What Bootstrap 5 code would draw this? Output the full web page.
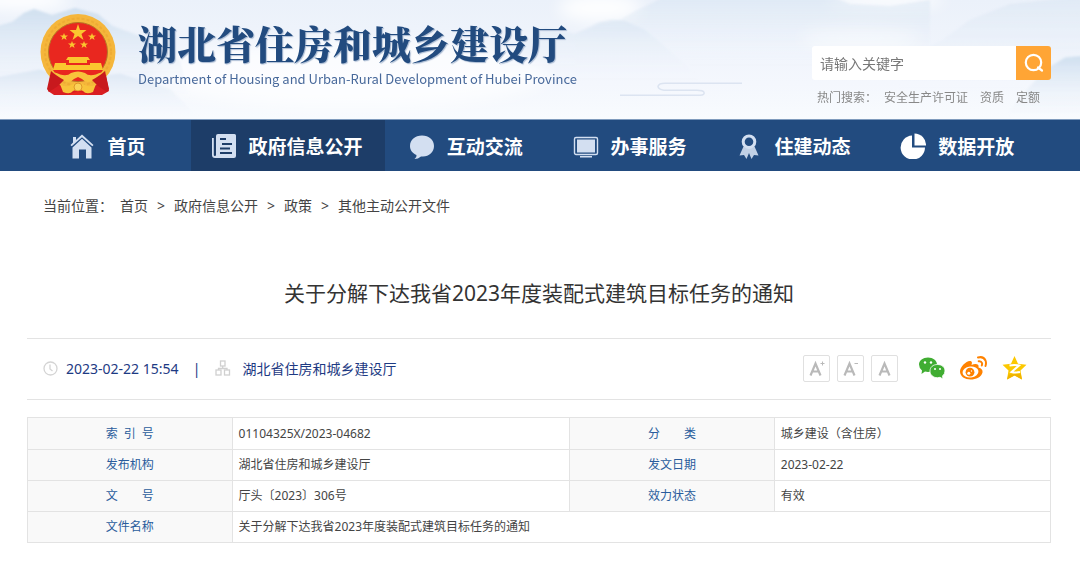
<!DOCTYPE html>
<html lang="zh-CN">
<head>
<meta charset="utf-8">
<meta name="viewport" content="width=device-width, initial-scale=1">
<title>关于分解下达我省2023年度装配式建筑目标任务的通知</title>
<link href="https://cdn.jsdelivr.net/npm/bootstrap@5.3.0/dist/css/bootstrap.min.css" rel="stylesheet">
<style>
  :root { --navy: #224b7f; --navy-dark: #1d3d68; --line: #e3e3e3; }
  body { font-family: "Noto Sans", "Noto Sans CJK SC", sans-serif; font-size: 14px; color: #444; background: #fff; }
  a { color: inherit; text-decoration: none; }
  .wrap { padding-left: 27px; padding-right: 29px; }
  .fs-hot, .doc-table { font-size: 12px; }

  .site-head { height: 120px; background: linear-gradient(#ebf1fa, #f4f7fd 70%, #f8fbfe); overflow: hidden; border-bottom: 1px solid #7f9bbd; }
  .scenery { z-index: 0; }
  .emblem { width: 76px; height: 82px; margin: 14px 22px 0 13px; }
  .brand-name { margin-top: 14px; font-family: "Noto Serif CJK SC", "Noto Sans CJK SC", serif; font-weight: 900; font-size: 39px; line-height: 56px; color: var(--navy); text-shadow: 1px 1px 1px #a9bad2; }
  .brand-en { font-family: "Noto Sans CJK SC", sans-serif; font-size: 13px; line-height: 18px; color: #48699b; }

  .search { width: 239px; margin-top: 46px; }
  .search .form-control { height: 34px; padding: 0 8px; border: 0; border-radius: 3px 0 0 3px; font-size: 14px; background: #fff; }
  .search .form-control::placeholder { color: #777; }
  .search .btn { width: 35px; height: 34px; padding: 0; border: 0; border-radius: 0 3px 3px 0; background: #ffa535; }
  .search .btn svg { display: block; margin: auto; }
  .hot-words { margin-top: 9px; padding-left: 5px; line-height: 18px; color: #888; }
  .hot-words .hot-label { margin-right: 7px; }
  .hot-links { gap: 12px; }

  .main-nav { background: var(--navy); }
  .main-nav .nav-item { width: 16%; }
  .main-nav .nav-item.wide { width: 19%; }
  .main-nav .nav-link { display: flex; align-items: center; justify-content: center; gap: 12px; height: 51px; padding: 0 3px 0 0; color: #fff; font-family: "Noto Sans CJK SC", sans-serif; font-size: 19px; line-height: 28px; font-weight: 700; white-space: nowrap; }
  .main-nav .nav-link.active { background: var(--navy-dark); }
  .main-nav svg { width: 26px; height: 26px; flex: none; fill: #d3dff1; }

  .crumbs { padding: 25px 16px 0; line-height: 20px; }
  .breadcrumb { --bs-breadcrumb-divider: '>'; --bs-breadcrumb-divider-color: #444; --bs-breadcrumb-item-padding-x: 9px; --bs-breadcrumb-font-size: 14px; margin-left: 7px; }
  .doc-title { margin: 61px 0 29px; font-size: 21px; line-height: 32px; font-weight: 400; color: #333; text-align: center; }
  .doc-meta { height: 62px; padding: 0 24px 2px 16px; border-top: 1px solid var(--line); border-bottom: 1px solid var(--line); color: #1d3a83; }
  .meta-bar { width: 36px; text-align: center; }
  .size-group { gap: 7px; }
  .share-group { gap: 14px; }
  .size-btn { width: 27px; height: 27px; padding: 0; border: 1px solid #e0e0e0; border-radius: 2px; background: #fff; }
  .size-btn svg { display: block; margin: auto; }

  .doc-table { margin-top: 17px; table-layout: fixed; border: 1px solid var(--line); color: #444; }
  .doc-table th, .doc-table td { padding: 5px 6px 4px; line-height: 22px; border: 1px solid var(--line); font-weight: 400; }
  .doc-table tr + tr > * { padding-top: 4px; }
  .doc-table th { background: #f9f9f9; color: #2a5c9c; text-align: center; }
  .doc-table .even { display: inline-block; width: 48px; text-align: justify; text-align-last: justify; vertical-align: top; }
</style>
</head>
<body>
<header class="site-head position-relative">
  <svg class="scenery position-absolute top-0 start-0 w-100 h-100" viewBox="0 0 1080 120" preserveAspectRatio="none" aria-hidden="true">
    <defs>
      <linearGradient id="hill" x1="0" y1="0" x2="0" y2="1"><stop offset="0" stop-color="#cfdfef"/><stop offset="1" stop-color="#f0f5fc" stop-opacity="0"/></linearGradient>
      <filter id="soft"><feGaussianBlur stdDeviation="1.200"/></filter>
      <filter id="mist"><feGaussianBlur stdDeviation="8"/></filter>
    </defs>
    <g filter="url(#mist)" fill="#fff">
      <ellipse cx="350" cy="75" rx="200" ry="34" opacity=".7"/><ellipse cx="600" cy="8" rx="42" ry="14" opacity=".9"/>
      <ellipse cx="885" cy="0" rx="60" ry="7"/><ellipse cx="860" cy="38" rx="60" ry="12" opacity=".6"/><ellipse cx="20" cy="0" rx="50" ry="10"/>
    </g>
    <g filter="url(#soft)" fill="url(#hill)">
      <path d="M-5 27L12 22 24 13 34 9 52 15 75 8 98 14 112 26 128 32 150 40 180 62 190 100H-5z"/>
      <path d="M-5 78L40 70 70 80 120 74 170 90 200 120H-5z" opacity=".6"/>
      <path d="M575 36L600 24 620 20 634 12 652 3 665-4H830L850 4 890 6 930 0V66H575z" opacity=".45"/>
      <path d="M500 62L545 28 575 34 600 22 612 20 625 21 645 30 680 60 700 80H500z" opacity=".45"/>
      <path d="M900 60L940 42 970 20 1010 4 1085-4V90H900z" opacity=".4"/>
      <path d="M1010 110L1045 70 1065 58 1085 56V118H1010z"/>
    </g>
    <path d="M620 96H700Q705 96 704 93 703 91 697 91H664Q658 90 658 87 659 84 665 84H742" fill="none" stroke="#dce4f1" stroke-width="1.500"/>
  </svg>

  <div class="wrap position-relative d-flex justify-content-between">
    <a href="#" class="d-flex text-nowrap">
      <svg class="emblem flex-shrink-0" viewBox="0 0 76 82" role="img" aria-label="国徽">
        <path d="M11 57L38 65 65 57 69 77 62 81 14 81 8 77z" fill="#d91e22"/>
        <ellipse cx="38" cy="38" rx="37.500" ry="38" fill="#f5b63b"/>
        <ellipse cx="38" cy="38" rx="33" ry="33.500" fill="none" stroke="#eeac34" stroke-width="2" stroke-dasharray="3 2"/>
        <circle cx="38" cy="38" r="29.500" fill="#e9271f" stroke="#b77825"/>
        <g fill="#fbc62f">
          <path d="M38 10l2 6h6.500l-5 4 2 6-5.500-4-5.500 4 2-6-5-4H36z"/>
          <path d="M24 19l1 2.500h3l-2.300 1.700.9 2.800-2.600-1.700-2.400 1.700.8-2.800-2.400-1.700h3zM52 19l1 2.500h3l-2.300 1.700.9 2.800-2.600-1.700-2.400 1.700.8-2.800-2.400-1.700h3zM32 27l1 2.500h3l-2.300 1.700.9 2.800-2.600-1.700-2.400 1.700.8-2.800-2.400-1.700h3zM44 27l1 2.500h3l-2.300 1.700.9 2.800-2.600-1.700-2.400 1.700.8-2.800-2.400-1.700h3z"/>
          <path d="M28 43H48L50 46H47V49H61L63 56H13L15 49H29V46H26z"/>
        </g>
        <path d="M26 49H50V51H26z" fill="#e9271f"/>
        <path d="M13 56H63L61 59 50 60 46 58H30L26 60 15 59z" fill="#e9271f"/>
        <path d="M14 58Q26 64 31 59 38 56 45 59 50 64 62 58L56 65Q47 71 42 65L38 63 34 65Q29 71 20 65z" fill="#f8c33b"/>
        <path d="M11 57Q15 61 24 66L18 72 9 78 7 75zM65 57Q61 61 52 66L58 72 67 78 69 75z" fill="#c8191d"/>
        <path d="M20 70Q25 74 31 71L35 69H41L45 71Q51 74 56 70L53 78Q46 81 43 77 38 74 33 77 30 81 23 78z" fill="#f8c33b"/>
        <circle cx="38" cy="73" r="4" fill="#fbd257" stroke="#e0982a"/>
        <path d="M28 81L38 77 48 81z" fill="#e9271f"/>
      </svg>
      <div>
        <div class="brand-name">湖北省住房和城乡建设厅</div>
        <div class="brand-en">Department of Housing and Urban-Rural Development of Hubei Province</div>
      </div>
    </a>
    <form class="search" role="search">
      <div class="input-group flex-nowrap">
        <input type="search" class="form-control" placeholder="请输入关键字" aria-label="请输入关键字">
        <button type="button" class="btn" aria-label="搜索">
          <svg width="20" height="20" viewBox="0 0 20 20" fill="none" stroke="#fff" stroke-width="2.200" stroke-linecap="round"><circle cx="9.500" cy="9.500" r="7.700"/><path d="M14 14.500L18 17.500"/></svg>
        </button>
      </div>
      <div class="hot-words fs-hot d-flex text-nowrap">
        <span class="hot-label">热门搜索：</span>
        <span class="hot-links d-flex"><a href="#">安全生产许可证</a><a href="#">资质</a><a href="#">定额</a></span>
      </div>
    </form>
  </div>
</header>

<nav class="main-nav wrap">
  <ul class="nav flex-nowrap">
    <li class="nav-item"><a class="nav-link" href="#">
      <svg viewBox="0 0 26 26"><path d="M13 1.500L24.500 12 23.300 13.300 13 4.200 2.700 13.300 1.500 12 4 9.500V4H7V7z"/><path d="M13 5.800L22.500 14.500V25.500H17V16.500H10V25.500H3.500V14.500z"/></svg>首页</a></li>
    <li class="nav-item wide"><a class="nav-link active" href="#" aria-current="page">
      <svg viewBox="0 0 26 26"><path d="M7 1H23.500Q25 1 25 2.500V23Q25 25 23 25H4Q1 25 1 22V5H2.800V22Q2.800 23 3.900 23 5 23 5 22V3Q5 1 7 1z"/><path d="M9 6H15M11 11H21M9 15.500H19M9 20H21" stroke="#1d3d68" stroke-width="1.800"/></svg>政府信息公开</a></li>
    <li class="nav-item"><a class="nav-link" href="#">
      <svg viewBox="0 0 26 26"><path d="M13 2.500C20 2.500 25 7 25 13S20 23.500 14 23.500L12 23.500Q9 26 5.500 26 8 24 7.500 22C3 20 1 17 1 13 1 7 6 2.500 13 2.500z"/></svg>互动交流</a></li>
    <li class="nav-item"><a class="nav-link" href="#">
      <svg viewBox="0 0 26 26"><rect x="1.500" y="4.500" width="23" height="17" rx="1.500" fill="none" stroke="#d3dff1" stroke-width="1.400"/><path d="M4 6.500H22V19.500H4zM7 23H19V24.500H7z"/></svg>办事服务</a></li>
    <li class="nav-item"><a class="nav-link" href="#">
      <svg viewBox="0 0 26 26"><path d="M7.500 13.500L3.500 22.500 8 22 10.500 26 13 20 15.500 26 18 22 22.500 22.500 18.500 13.500z" opacity=".9"/><circle cx="13" cy="8.700" r="5.800" fill="#224b7f" stroke="#d3dff1" stroke-width="3"/></svg>住建动态</a></li>
    <li class="nav-item"><a class="nav-link" href="#">
      <svg viewBox="0 0 26 26"><g fill="#fff"><path d="M12 2.500V14.500H25A12.200 12 0 1 1 12 2.500z"/><path d="M14.500 0.500A11.500 11.500 0 0 1 26 12.500H14.500z"/></g></svg>数据开放</a></li>
  </ul>
</nav>

<main class="wrap">
  <nav class="crumbs d-flex" aria-label="当前位置">
    <span class="text-nowrap">当前位置：</span>
    <ol class="breadcrumb mb-0">
      <li class="breadcrumb-item"><a href="#">首页</a></li>
      <li class="breadcrumb-item"><a href="#">政府信息公开</a></li>
      <li class="breadcrumb-item"><a href="#">政策</a></li>
      <li class="breadcrumb-item"><a href="#">其他主动公开文件</a></li>
    </ol>
  </nav>

  <h1 class="doc-title">关于分解下达我省2023年度装配式建筑目标任务的通知</h1>

  <div class="doc-meta d-flex align-items-center justify-content-between">
    <div class="d-flex align-items-center text-nowrap">
      <svg class="me-2" width="15" height="15" viewBox="0 0 15 15" fill="none" stroke="#d4d4d4" stroke-width="1.300"><circle cx="7.500" cy="7.500" r="6.500"/><path d="M7 3.500V8L9.500 10"/></svg>
      <time datetime="2023-02-22T15:54">2023-02-22 15:54</time>
      <span class="meta-bar">|</span>
      <svg width="16" height="16" viewBox="0 0 16 16" fill="none" stroke="#d0d0d0" stroke-width="1.300"><rect x="5.500" y="1" width="4.500" height="5"/><path d="M7.700 6V9M3.500 10V8.500H12V10"/><rect x="1" y="10" width="5" height="5"/><rect x="9.500" y="10" width="5" height="5"/></svg>
      <span class="ps-2 ms-1">湖北省住房和城乡建设厅</span>
    </div>
    <div class="d-flex align-items-center">
      <div class="size-group d-flex me-3">
        <button type="button" class="size-btn" aria-label="放大字号"><svg width="23" height="23" viewBox="0 0 23 23" fill="none" stroke="#b9b9b9" stroke-width="2.200"><path d="M5.500 18.500L10.500 6.500 15.500 18.500M7.500 14.500H13.500"/><path d="M15.500 6.500H19.500M17.500 4.500V8.500" stroke-width="1"/></svg></button>
        <button type="button" class="size-btn" aria-label="缩小字号"><svg width="23" height="23" viewBox="0 0 23 23" fill="none" stroke="#b9b9b9" stroke-width="2.200"><path d="M5.500 18.500L10.500 6.500 15.500 18.500M7.500 14.500H13.500"/><path d="M15.500 6.500H19" stroke-width="1"/></svg></button>
        <button type="button" class="size-btn" aria-label="默认字号"><svg width="23" height="23" viewBox="0 0 23 23" fill="none" stroke="#b9b9b9" stroke-width="2.200"><path d="M6.500 18.500L11.500 6.500 16.500 18.500M8.500 14.500H14.500"/></svg></button>
      </div>
      <div class="share-group d-flex ms-1">
        <a href="#" aria-label="微信"><svg class="d-block" width="28" height="26" viewBox="0 0 28 26"><path d="M10 2.500C15 2.500 19 5.500 19 9.500S15 17 10 17L7 16.500 3.500 19 4 15.500Q1 13 1 9.500C1 5.500 5 2.500 10 2.500z" fill="#40ad32"/><path d="M19.500 9.500C24 9.500 27 12.300 27 16Q27 18.800 24.500 21L25 24 22 22.300 19.500 22.700C15 22.700 12 19.800 12 16S15 9.500 19.500 9.500z" fill="#40ad32" stroke="#fff" stroke-width=".8"/><g fill="#fff"><circle cx="7" cy="7.500" r="1.200"/><circle cx="13" cy="7.500" r="1.200"/><circle cx="17" cy="14" r="1"/><circle cx="22" cy="14" r="1"/></g></svg></a>
        <a href="#" aria-label="微博"><svg class="d-block" width="28" height="26" viewBox="0 0 28 26"><path d="M0 16.500C0 11.500 7 5 10.500 6 12.500 6.500 12 8.500 11.500 10 15 8.500 19.500 8.500 18.500 12.500 21.500 13.500 23 15 22.500 17.500 21.500 22 16 24.500 10.500 24.500S0 21.500 0 16.500z" fill="#ff8200"/><ellipse cx="10.500" cy="17" rx="8" ry="5.500" transform="rotate(-7 10.500 17)" fill="#fff"/><circle cx="10" cy="17.200" r="4.400" fill="#ff8200"/><circle cx="8.800" cy="18.200" r="1.500" fill="#fff"/><circle cx="11.500" cy="16" r=".7" fill="#fff"/><g fill="none" stroke="#ff8200" stroke-width="2" stroke-linecap="round"><path d="M18 2.500Q23.500 1 25.500 5.500 26.500 8 25.500 11M18.700 6.200Q21.200 5.800 22 8 22.300 9 21.800 10.500"/></g></svg></a>
        <a href="#" aria-label="QQ空间"><svg class="d-block" width="25" height="26" viewBox="0 0 25 26"><path d="M12.500 1L16 8.700 24.500 9.700 18.500 15.500 20 24.500 12.500 20.500 5 24.500 6.500 15.500.5 9.700 9 8.700z" fill="#fcc800"/><path d="M6.500 19.500L18.700 18.500 20 24.500 12.500 20.500 5 24.500z" fill="#f0b400"/><path d="M7.500 10.500Q12 9.500 17 10.500L9.500 17Q13 18 18 17" fill="none" stroke="#fff" stroke-width="2"/></svg></a>
      </div>
    </div>
  </div>

  <table class="doc-table w-100">
    <colgroup><col style="width:20%"><col style="width:33%"><col style="width:20%"><col style="width:27%"></colgroup>
    <tbody>
      <tr><th scope="row"><span class="even">索 引 号</span></th><td>01104325X/2023-04682</td><th scope="row"><span class="even">分 类</span></th><td>城乡建设（含住房）</td></tr>
      <tr><th scope="row">发布机构</th><td>湖北省住房和城乡建设厅</td><th scope="row">发文日期</th><td>2023-02-22</td></tr>
      <tr><th scope="row"><span class="even">文 号</span></th><td>厅头〔2023〕306号</td><th scope="row">效力状态</th><td>有效</td></tr>
      <tr><th scope="row">文件名称</th><td colspan="3">关于分解下达我省2023年度装配式建筑目标任务的通知</td></tr>
    </tbody>
  </table>
</main>
<script src="https://cdn.jsdelivr.net/npm/bootstrap@5.3.0/dist/js/bootstrap.bundle.min.js"></script>
</body>
</html>
